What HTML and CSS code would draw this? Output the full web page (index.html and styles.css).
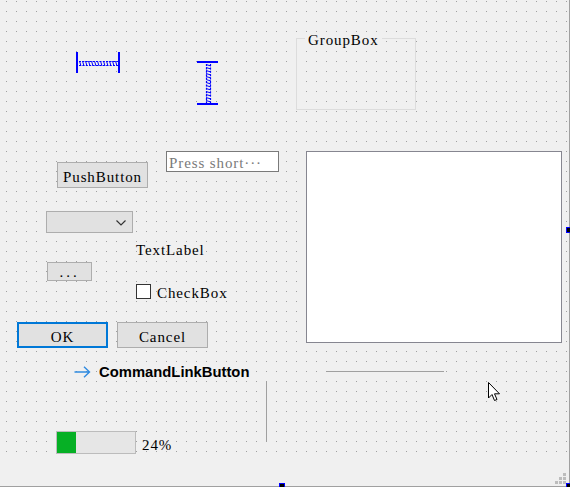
FILE: index.html
```html
<!DOCTYPE html>
<html>
<head>
<meta charset="utf-8">
<link rel="stylesheet" href="styles.css">
</head>
<body>
<div class="form">
  <div class="grid"></div>

  <div class="hspacer">
    <span class="bar bar-l"></span>
    <svg class="spring-h" width="40" height="8" viewBox="0 0 40 8">
      <path d="M1 2.5 H40 M1 6.5 H40" stroke="#0000ff" stroke-width="1.2" stroke-dasharray="2 1.4" fill="none"/>
      <path d="M1.5 2 L3 7 M4.5 2 L6 7 M7.5 2 L9 7 M10.5 2 L12 7 M13.5 2 L15 7 M16.5 2 L18 7 M19.5 2 L21 7 M22.5 2 L24 7 M25.5 2 L27 7 M28.5 2 L30 7 M31.5 2 L33 7 M34.5 2 L36 7 M37.5 2 L39 7" stroke="#0000ff" stroke-width="1" fill="none"/>
    </svg>
    <span class="bar bar-r"></span>
  </div>

  <div class="vspacer">
    <span class="vbar vbar-t"></span>
    <svg class="spring-v" width="8" height="40" viewBox="0 0 8 40">
      <path d="M2.5 1 V40 M6.5 1 V40" stroke="#0000ff" stroke-width="1.2" stroke-dasharray="2 1.4" fill="none"/>
      <path d="M2 1.5 L7 3 M2 4.5 L7 6 M2 7.5 L7 9 M2 10.5 L7 12 M2 13.5 L7 15 M2 16.5 L7 18 M2 19.5 L7 21 M2 22.5 L7 24 M2 25.5 L7 27 M2 28.5 L7 30 M2 31.5 L7 33 M2 34.5 L7 36 M2 37.5 L7 39" stroke="#0000ff" stroke-width="1" fill="none"/>
    </svg>
    <span class="vbar vbar-b"></span>
  </div>

  <div class="groupbox"><span class="gb-title">GroupBox</span></div>

  <div class="btn pushbutton">PushButton</div>
  <div class="lineedit">Press short···</div>

  <div class="combo">
    <svg class="chev" width="10" height="6" viewBox="0 0 10 6"><path d="M0.5 0.5 L5 5 L9.5 0.5" stroke="#333" stroke-width="1.2" fill="none"/></svg>
  </div>

  <div class="label textlabel">TextLabel</div>
  <div class="btn toolbutton">...</div>

  <div class="checkbox"><span class="cb-box"></span><span class="cb-text">CheckBox</span></div>

  <div class="btn okbtn">OK</div>
  <div class="btn cancelbtn">Cancel</div>

  <div class="cmdlink">
    <svg class="cmd-arrow" width="17" height="12" viewBox="0 0 17 12"><path d="M0.5 6 H15.5 M10 0.8 L15.5 6 L10 11.2" stroke="#2f8ae0" stroke-width="1.4" fill="none"/></svg>
    <span class="cmd-text">CommandLinkButton</span>
  </div>

  <div class="vline"></div>
  <div class="hline"></div>

  <div class="progress"><div class="chunk" style="width:19px"></div></div>
  <div class="label pct">24%</div>

  <div class="textedit"></div>

  <svg class="cursor" width="13" height="21" viewBox="0 0 13 21">
    <path d="M0.5 0.5 L0.5 16 L4 12.5 L6.5 18.5 L9 17.5 L6.5 11.8 L11.5 11.8 Z" fill="#fff" stroke="#000" stroke-width="1"/>
  </svg>

  <svg class="grip" width="12" height="12" viewBox="0 0 12 12">
    <rect x="8" y="0" width="3" height="3" fill="#bdbdbd"/>
    <rect x="4" y="4" width="3" height="3" fill="#bdbdbd"/>
    <rect x="8" y="4" width="3" height="3" fill="#bdbdbd"/>
    <rect x="0" y="8" width="3" height="3" fill="#bdbdbd"/>
    <rect x="4" y="8" width="3" height="3" fill="#bdbdbd"/>
    <rect x="8" y="8" width="3" height="3" fill="#bdbdbd"/>
  </svg>

  <span class="handle h-right"></span>
  <span class="handle h-bottom"></span>
  <span class="handle h-corner"></span>
</div>
</body>
</html>
```

FILE: styles.css
```css
html, body {
  margin: 0;
  padding: 0;
  background: #f0f0f0;
  overflow: hidden;
}

.form {
  position: relative;
  width: 569px;
  height: 486px;
  border-right: 1px solid #a0a0a0;
  border-bottom: 1px solid #a0a0a0;
  background: #f0f0f0;
  font-family: "Liberation Serif", "Times New Roman", serif;
  font-size: 15px;
  letter-spacing: 0.9px;
  color: #000;
}

.grid {
  position: absolute;
  left: 0;
  top: 0;
  width: 568px;
  height: 455px;
  background-image:
    linear-gradient(to right, #f0f0f0 9px, transparent 9px),
    linear-gradient(to bottom, #f0f0f0 9px, #a0a0a0 9px);
  background-size: 10px 10px;
  background-position: -3px 2px;
}

/* spacers */
.hspacer {
  position: absolute;
  left: 76px;
  top: 52px;
  width: 44px;
  height: 21px;
  display: flex;
  align-items: center;
}
.bar {
  width: 2px;
  height: 21px;
  background: #0000ff;
}
.spring-h { display: block; }

.vspacer {
  position: absolute;
  left: 197px;
  top: 61px;
  width: 21px;
  height: 44px;
  display: flex;
  flex-direction: column;
  align-items: center;
}
.vbar {
  width: 21px;
  height: 2px;
  background: #0000ff;
}
.spring-v { display: block; }

/* group box */
.groupbox {
  position: absolute;
  left: 296px;
  top: 38px;
  width: 118px;
  height: 70px;
  border: 1px solid #dcdcdc;
}
.gb-title {
  position: absolute;
  left: 8px;
  top: -7px;
  padding: 0 3px;
  line-height: 16px;
  background: #f0f0f0;
}

/* buttons */
.btn {
  position: absolute;
  box-sizing: border-box;
  background: #e1e1e1;
  border: 1px solid #adadad;
  display: flex;
  align-items: center;
  justify-content: center;
  line-height: 16px;
  padding-top: 3px;
}
.pushbutton { left: 57px; top: 162px; width: 91px; height: 26px; }
.toolbutton { left: 47px; top: 262px; width: 45px; height: 19px; padding-top: 1px; letter-spacing: 3px; }
.okbtn { left: 17px; top: 322px; width: 91px; height: 26px; border: 2px solid #0078d7; }
.cancelbtn { left: 117px; top: 322px; width: 91px; height: 26px; }

.lineedit {
  position: absolute;
  box-sizing: border-box;
  left: 166px;
  top: 151px;
  width: 113px;
  height: 21px;
  border: 1px solid #7a7a7a;
  background: #fff;
  color: #7a7a7a;
  padding-left: 2px;
  padding-top: 2px;
  line-height: 18px;
  white-space: nowrap;
  overflow: hidden;
}

.combo {
  position: absolute;
  box-sizing: border-box;
  left: 46px;
  top: 211px;
  width: 87px;
  height: 22px;
  background: #e1e1e1;
  border: 1px solid #adadad;
  display: flex;
  align-items: center;
  justify-content: flex-end;
  padding-right: 6px;
}
.chev { display: block; margin-top: 1px; }

.label {
  position: absolute;
  line-height: 16px;
  white-space: nowrap;
}
.textlabel { left: 136px; top: 242px; }
.pct { left: 142px; top: 437px; }

.checkbox {
  position: absolute;
  left: 136px;
  top: 282px;
  display: flex;
  align-items: center;
  gap: 6px;
}
.cb-box {
  width: 13px;
  height: 13px;
  border: 1px solid #333;
  background: #fff;
}
.cb-text { line-height: 16px; padding-top: 3px; }

.cmdlink {
  position: absolute;
  left: 74px;
  top: 363px;
  height: 18px;
  display: flex;
  align-items: center;
  gap: 8px;
}
.cmd-arrow { display: block; }
.cmd-text {
  font-family: "Liberation Sans", Arial, sans-serif;
  font-weight: bold;
  font-size: 14.8px;
  letter-spacing: 0;
  line-height: 18px;
}

.vline {
  position: absolute;
  left: 266px;
  top: 381px;
  width: 1px;
  height: 61px;
  background: #a0a0a0;
}
.hline {
  position: absolute;
  left: 326px;
  top: 371px;
  width: 118px;
  height: 1px;
  background: #a0a0a0;
}

.progress {
  position: absolute;
  box-sizing: border-box;
  left: 56px;
  top: 431px;
  width: 80px;
  height: 23px;
  background: #e6e6e6;
  border: 1px solid #bcbcbc;
}
.chunk {
  height: 100%;
  background: #06b025;
}

.textedit {
  position: absolute;
  box-sizing: border-box;
  left: 306px;
  top: 151px;
  width: 256px;
  height: 192px;
  background: #fff;
  border: 1px solid #868690;
}

.cursor {
  position: absolute;
  left: 488px;
  top: 382px;
  display: block;
}

.grip {
  position: absolute;
  left: 555px;
  top: 473px;
  display: block;
}

.handle {
  position: absolute;
  box-sizing: border-box;
  width: 6px;
  height: 6px;
  background: #000;
  border: 1px solid #0000ff;
}
.h-right { left: 566px; top: 227px; }
.h-bottom { left: 279px; top: 483px; }
.h-corner { left: 566px; top: 483px; }
```
